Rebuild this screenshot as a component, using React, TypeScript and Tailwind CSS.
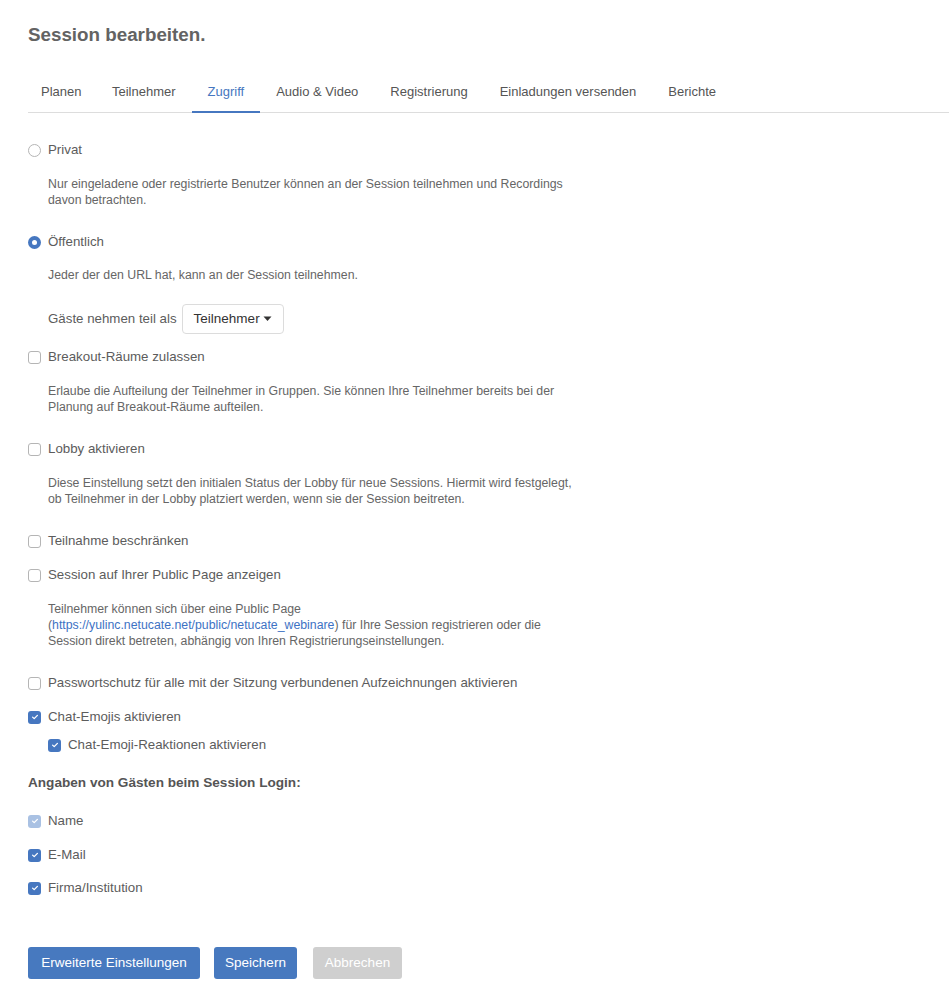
import React from "react";

const font = { fontFamily: '"Liberation Sans", Arial, sans-serif' };

function Check({ checked = false, disabled = false }: { checked?: boolean; disabled?: boolean }) {
  if (checked) {
    return (
      <span
        className={`flex h-[13px] w-[13px] shrink-0 items-center justify-center rounded-[3px] ${
          disabled ? "bg-[#a9c1e3]" : "bg-[#4677c0]"
        }`}
      >
        <svg width="8" height="8" viewBox="0 0 8 8" fill="none">
          <path d="M1.6 4.1 L3.2 5.6 L6.4 2.4" stroke="white" strokeWidth="1.3" strokeLinecap="round" strokeLinejoin="round" />
        </svg>
      </span>
    );
  }
  return <span className="h-[13px] w-[13px] shrink-0 rounded-[3px] border border-[#b5b5b5] bg-white" />;
}

function Radio({ checked = false }: { checked?: boolean }) {
  if (checked) {
    return (
      <span className="flex h-[13px] w-[13px] shrink-0 items-center justify-center rounded-full bg-[#4677c0]">
        <span className="h-[5px] w-[5px] rounded-full bg-white" />
      </span>
    );
  }
  return <span className="h-[13px] w-[13px] shrink-0 rounded-full border border-[#b5b5b5] bg-white" />;
}

function Row({ children, control, className = "" }: { children: React.ReactNode; control: React.ReactNode; className?: string }) {
  return (
    <div className={`flex h-5 items-center gap-[7px] whitespace-nowrap text-[13.3px] text-[#5c5c5c] ${className}`}>
      {control}
      <span>{children}</span>
    </div>
  );
}

function Desc({ children, className = "" }: { children: React.ReactNode; className?: string }) {
  return <p className={`mt-4 ml-5 w-[531px] text-[12.3px] leading-4 text-[#666] ${className}`}>{children}</p>;
}

export default function App() {
  const tabs = ["Planen", "Teilnehmer", "Zugriff", "Audio & Video", "Registrierung", "Einladungen versenden", "Berichte"];
  return (
    <div className="min-h-[1000px] w-[949px] bg-white pl-7" style={font}>
      <h1 className="pt-[24px] text-[18.8px] font-semibold leading-[22px] text-[#636363]">Session bearbeiten.</h1>

      <div className="mt-[38px] flex border-b border-[#dddddd]">
        {tabs.map((t, i) => (
          <div
            key={t}
            className={`relative pb-[12px] text-[13px] leading-4 ${
              i === 2 ? "text-[#4677c0]" : "text-[#555]"
            } ${i === 0 ? "pl-[13px] pr-[14.5px]" : "px-[16px]"}`}
          >
            {t}
            {i === 2 && <span className="absolute bottom-[-1px] left-0 right-0 h-[2px] bg-[#4677c0]" />}
          </div>
        ))}
      </div>

      <div className="pt-[27px]">
        <Row control={<Radio />}>Privat</Row>
        <Desc>
          Nur eingeladene oder registrierte Benutzer können an der Session teilnehmen und Recordings davon betrachten.
        </Desc>

        <Row control={<Radio checked />} className="mt-6">
          Öffentlich
        </Row>
        <Desc className="mt-[15px]">Jeder der den URL hat, kann an der Session teilnehmen.</Desc>

        <div className="mt-[21px] flex items-center gap-[5px] pl-5 text-[13.3px] text-[#5c5c5c]">
          <span>Gäste nehmen teil als</span>
          <div className="flex h-[30px] w-[102px] items-center justify-center gap-[3px] rounded-[4px] border border-[#dcdcdc] bg-white text-[13.5px] text-[#333]">
            Teilnehmer
            <svg width="9" height="6" viewBox="0 0 9 6">
              <path d="M0.5 0.5 L8.5 0.5 L4.5 5 Z" fill="#333" />
            </svg>
          </div>
        </div>

        <Row control={<Check />} className="mt-[13px]">
          Breakout-Räume zulassen
        </Row>
        <Desc>
          Erlaube die Aufteilung der Teilnehmer in Gruppen. Sie können Ihre Teilnehmer bereits bei der Planung auf Breakout-Räume aufteilen.
        </Desc>

        <Row control={<Check />} className="mt-6">
          Lobby aktivieren
        </Row>
        <Desc>
          Diese Einstellung setzt den initialen Status der Lobby für neue Sessions. Hiermit wird festgelegt, ob Teilnehmer in der Lobby platziert werden, wenn sie der Session beitreten.
        </Desc>

        <Row control={<Check />} className="mt-6">
          Teilnahme beschränken
        </Row>
        <Row control={<Check />} className="mt-[14px]">
          Session auf Ihrer Public Page anzeigen
        </Row>
        <Desc>
          Teilnehmer können sich über eine Public Page
          <br />
          <span>(</span>
          <a className="text-[#3d72c4]">https://yulinc.netucate.net/public/netucate_webinare</a>
          <span>) für Ihre Session registrieren oder die Session direkt betreten, abhängig von Ihren Registrierungseinstellungen.</span>
        </Desc>

        <Row control={<Check />} className="mt-6">
          Passwortschutz für alle mit der Sitzung verbundenen Aufzeichnungen aktivieren
        </Row>
        <Row control={<Check checked />} className="mt-[14px]">
          Chat-Emojis aktivieren
        </Row>
        <Row control={<Check checked />} className="mt-2 pl-5">
          Chat-Emoji-Reaktionen aktivieren
        </Row>

        <div className="mt-[18px] flex h-5 items-center text-[13.6px] font-bold text-[#555]">
          Angaben von Gästen beim Session Login:
        </div>

        <Row control={<Check checked disabled />} className="mt-[18px]">
          Name
        </Row>
        <Row control={<Check checked />} className="mt-[14px]">
          E-Mail
        </Row>
        <Row control={<Check checked />} className="mt-[13px]">
          Firma/Institution
        </Row>

        <div className="mt-[49px] flex">
          <button className="h-8 w-[172px] rounded-[3px] bg-[#4779bf] text-[13.5px] text-white">Erweiterte Einstellungen</button>
          <button className="ml-[14px] h-8 w-[83px] rounded-[3px] bg-[#4779bf] text-[13.5px] text-white">Speichern</button>
          <button className="ml-[16px] h-8 w-[89px] rounded-[3px] bg-[#cfcfcf] text-[13.5px] text-white">Abbrechen</button>
        </div>
      </div>
    </div>
  );
}
